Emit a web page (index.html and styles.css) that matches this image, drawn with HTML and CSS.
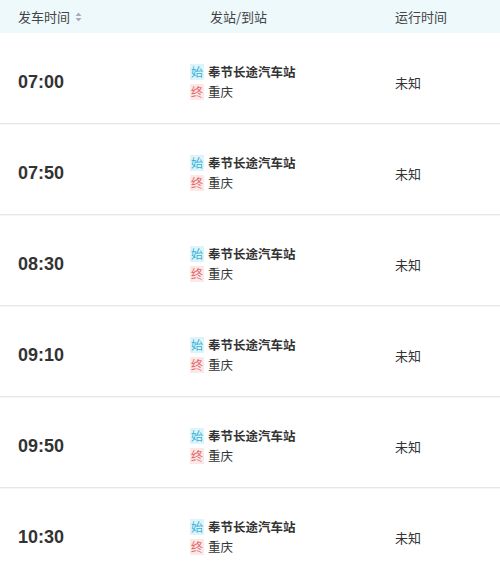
FILE: index.html
```html
<!DOCTYPE html>
<html lang="zh">
<head>
<meta charset="utf-8">
<link rel="stylesheet" href="styles.css">
</head>
<body>
<div class="table">
  <div class="head">
    <div class="c1">发车时间 <span class="sort"><svg width="7" height="10" viewBox="0 0 7 10"><path d="M3.5 0.5 L6.5 4 L0.5 4 Z M3.5 9.5 L6.5 6 L0.5 6 Z" fill="#aab"/></svg></span></div>
    <div class="c2 hc2">发站/到站</div>
    <div class="c3">运行时间</div>
  </div>
  <div class="row"><div class="c1 time">07:00</div><div class="c2"><div class="st"><span class="bd s">始</span><b>奉节长途汽车站</b></div><div class="st"><span class="bd e">终</span>重庆</div></div><div class="c3">未知</div></div>
  <div class="row"><div class="c1 time">07:50</div><div class="c2"><div class="st"><span class="bd s">始</span><b>奉节长途汽车站</b></div><div class="st"><span class="bd e">终</span>重庆</div></div><div class="c3">未知</div></div>
  <div class="row"><div class="c1 time">08:30</div><div class="c2"><div class="st"><span class="bd s">始</span><b>奉节长途汽车站</b></div><div class="st"><span class="bd e">终</span>重庆</div></div><div class="c3">未知</div></div>
  <div class="row"><div class="c1 time">09:10</div><div class="c2"><div class="st"><span class="bd s">始</span><b>奉节长途汽车站</b></div><div class="st"><span class="bd e">终</span>重庆</div></div><div class="c3">未知</div></div>
  <div class="row"><div class="c1 time">09:50</div><div class="c2"><div class="st"><span class="bd s">始</span><b>奉节长途汽车站</b></div><div class="st"><span class="bd e">终</span>重庆</div></div><div class="c3">未知</div></div>
  <div class="row"><div class="c1 time">10:30</div><div class="c2"><div class="st"><span class="bd s">始</span><b>奉节长途汽车站</b></div><div class="st"><span class="bd e">终</span>重庆</div></div><div class="c3">未知</div></div>
</div>
</body>
</html>
```
FILE: styles.css
```css
html, body { margin: 0; padding: 0; background: #fff; }
body { font-family: "Noto Sans CJK SC", "Noto Sans", sans-serif; color: #333; font-size: 13px; }
.table { width: 500px; }
.head, .row { display: grid; grid-template-columns: 190px 205px 1fr; align-items: center; }
.head { height: 33px; background: #eef9fc; color: #444; font-size: 13px; }
.head .c1 { display: flex; align-items: center; gap: 5px; }
.sort { display: inline-flex; }
.hc2 { padding-left: 20px; }
.c1 { padding-left: 18px; }
.row { height: 91px; border-bottom: 1px solid #e6e6e6; box-shadow: 0 1px 0 #f6f6f6; padding-top: 8px; box-sizing: border-box; }
.time { font-family: "Liberation Sans", Arial, sans-serif; font-weight: bold; font-size: 18px; color: #333; }
.st { display: flex; align-items: center; height: 20px; line-height: 20px; font-size: 12.5px; }
.st b { font-weight: bold; color: #333; }
.bd { display: inline-block; width: 14px; height: 16px; line-height: 16px; text-align: center; font-size: 12px; margin-right: 4px; }
.bd.s { color: #35b2d6; background: #def4fa; }
.bd.e { color: #e56a6a; background: #fbe8e8; }
```
